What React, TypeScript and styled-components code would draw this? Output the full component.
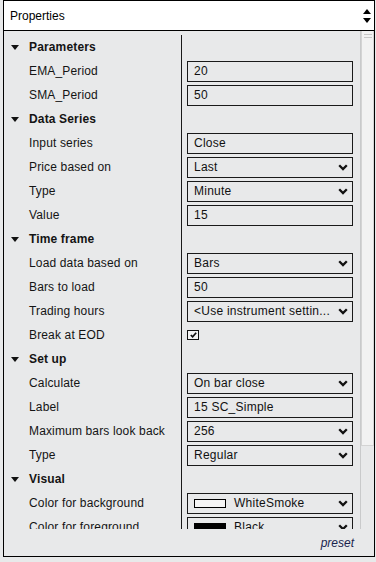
import React from "react"
import styled, { createGlobalStyle } from "styled-components"

const GlobalStyle = createGlobalStyle`
  html, body {
    margin: 0;
    padding: 0;
    background: #e8e9ea;
    font-family: "Liberation Sans", Arial, sans-serif;
  }
`

const Frame = styled.div`
  box-sizing: border-box;
  width: 372px;
  height: 557px;
  margin-left: 3px;
  border: 1px solid #000;
  display: flex;
  flex-direction: column;
  background: #e8e9ea;
`

const Header = styled.div`
  height: 29px;
  flex: none;
  background: #fff;
  border-bottom: 1px solid #000;
  display: flex;
  align-items: center;
  justify-content: space-between;
  padding-left: 6px;
  font-size: 12px;
  color: #000;
`

const Arrows = styled.div`
  width: 14px;
  display: flex;
  flex-direction: column;
  align-items: center;
  gap: 4px;
  padding-top: 1px;
`

const Body = styled.div`
  flex: 1;
  display: flex;
  min-height: 0;
`

const List = styled.div`
  flex: 1;
  overflow: hidden;
  padding-top: 4px;
`

const Row = styled.div`
  display: flex;
  height: 24px;
  font-size: 12px;
  color: #141414;
`

const LabelCell = styled.div<{ $head?: boolean }>`
  box-sizing: border-box;
  width: 178px;
  flex: none;
  border-right: 1px solid #1a1a1a;
  display: flex;
  align-items: center;
  gap: 10px;
  padding-left: ${p => (p.$head ? "7px" : "25px")};
  font-weight: ${p => (p.$head ? "bold" : "normal")};
  letter-spacing: 0.15px;
  white-space: nowrap;
`

const ValueCell = styled.div`
  flex: 1;
  display: flex;
  align-items: center;
  padding-left: 5px;
`

const Field = styled.div`
  box-sizing: border-box;
  width: 166px;
  height: 21px;
  border: 1px solid #1a1a1a;
  display: flex;
  align-items: center;
  justify-content: space-between;
  padding: 0 4px 0 6px;
  font-size: 12px;
  letter-spacing: 0.25px;
  color: #111;
  white-space: nowrap;
`

const Swatch = styled.span<{ $color: string }>`
  display: inline-block;
  width: 30px;
  height: 7px;
  border: 1px solid #000;
  background: ${p => p.$color};
  margin-right: 8px;
  vertical-align: middle;
`

const Check = styled.div`
  box-sizing: border-box;
  width: 12px;
  height: 10px;
  border: 1px solid #111;
  display: flex;
  align-items: center;
  justify-content: center;
  background: #f4f4f4;
`

const ScrollTrack = styled.div`
  width: 13px;
  flex: none;
  border-left: 1px solid #c9cacb;
  background: #e8e9ea;
`

const Thumb = styled.div`
  box-sizing: border-box;
  height: 415px;
  background: #f2f2f2;
  border: 1px solid #d4d4d4;
  border-top: none;
  display: flex;
  flex-direction: column;
  align-items: center;
  gap: 2px;
  padding-top: 3px;
`

const Grip = styled.div`
  width: 8px;
  height: 1px;
  background: #c8c8c8;
`

const Footer = styled.div`
  height: 27px;
  flex: none;
  display: flex;
  align-items: center;
  justify-content: flex-end;
  padding-right: 20px;
  font-size: 12px;
  font-style: italic;
  color: #1a244d;
`

const Triangle = () => (
  <svg width="8" height="5" viewBox="0 0 8 5">
    <polygon points="0,0 8,0 4,5" fill="#111" />
  </svg>
)

const Chevron = () => (
  <svg width="10" height="7" viewBox="0 0 10 7">
    <polyline points="1.2,1.2 5,5 8.8,1.2" fill="none" stroke="#111" strokeWidth="2.3" />
  </svg>
)

type Prop = {
  label: string
  kind: "text" | "select" | "check" | "color"
  value?: string
  color?: string
}

type Section = { title: string; items: Prop[] }

const sections: Section[] = [
  {
    title: "Parameters",
    items: [
      { label: "EMA_Period", kind: "text", value: "20" },
      { label: "SMA_Period", kind: "text", value: "50" },
    ],
  },
  {
    title: "Data Series",
    items: [
      { label: "Input series", kind: "text", value: "Close" },
      { label: "Price based on", kind: "select", value: "Last" },
      { label: "Type", kind: "select", value: "Minute" },
      { label: "Value", kind: "text", value: "15" },
    ],
  },
  {
    title: "Time frame",
    items: [
      { label: "Load data based on", kind: "select", value: "Bars" },
      { label: "Bars to load", kind: "text", value: "50" },
      { label: "Trading hours", kind: "select", value: "<Use instrument settin..." },
      { label: "Break at EOD", kind: "check" },
    ],
  },
  {
    title: "Set up",
    items: [
      { label: "Calculate", kind: "select", value: "On bar close" },
      { label: "Label", kind: "text", value: "15 SC_Simple" },
      { label: "Maximum bars look back", kind: "select", value: "256" },
      { label: "Type", kind: "select", value: "Regular" },
    ],
  },
  {
    title: "Visual",
    items: [
      { label: "Color for background", kind: "color", value: "WhiteSmoke", color: "#f5f5f5" },
      { label: "Color for foreground", kind: "color", value: "Black", color: "#000" },
    ],
  },
]

const Value: React.FC<{ item: Prop }> = ({ item }) => {
  if (item.kind === "check") {
    return (
      <Check>
        <svg width="7" height="6" viewBox="0 0 7 6">
          <polyline points="0.8,3 2.6,4.8 6.2,0.8" fill="none" stroke="#111" strokeWidth="1.7" />
        </svg>
      </Check>
    )
  }
  return (
    <Field>
      <span>
        {item.kind === "color" && <Swatch $color={item.color || "#fff"} />}
        {item.value}
      </span>
      {item.kind !== "text" && <Chevron />}
    </Field>
  )
}

const App: React.FC = () => {
  return (
    <>
      <GlobalStyle />
      <Frame>
        <Header>
          <span>Properties</span>
          <Arrows>
            <svg width="8" height="5" viewBox="0 0 8 5">
              <polygon points="4,0 8,5 0,5" fill="#000" />
            </svg>
            <svg width="8" height="5" viewBox="0 0 8 5">
              <polygon points="0,0 8,0 4,5" fill="#000" />
            </svg>
          </Arrows>
        </Header>
        <Body>
          <List>
            {sections.map(s => (
              <React.Fragment key={s.title}>
                <Row>
                  <LabelCell $head>
                    <Triangle />
                    {s.title}
                  </LabelCell>
                  <ValueCell />
                </Row>
                {s.items.map(it => (
                  <Row key={s.title + it.label}>
                    <LabelCell>{it.label}</LabelCell>
                    <ValueCell>
                      <Value item={it} />
                    </ValueCell>
                  </Row>
                ))}
              </React.Fragment>
            ))}
          </List>
          <ScrollTrack>
            <Thumb>
              <Grip />
              <Grip />
            </Thumb>
          </ScrollTrack>
        </Body>
        <Footer>preset</Footer>
      </Frame>
    </>
  )
}

export default App
